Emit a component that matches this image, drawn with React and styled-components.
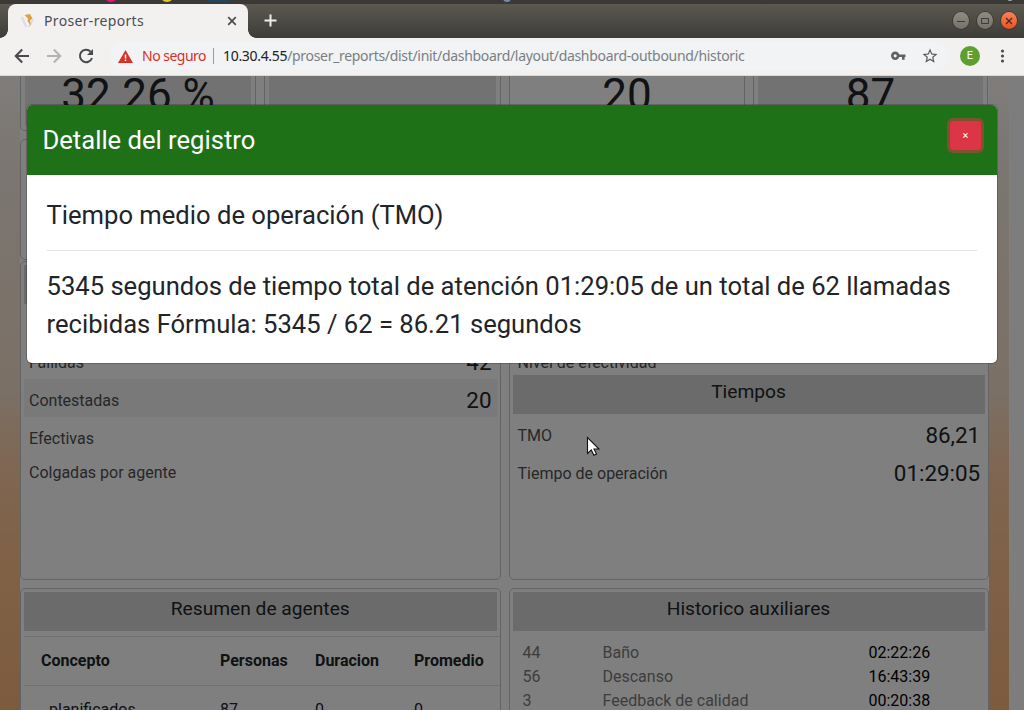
import React from "react";
import styled, { createGlobalStyle } from "styled-components";

const GlobalStyle = createGlobalStyle`
  *, *::before, *::after { box-sizing: border-box; }
  html, body { margin: 0; overflow: hidden; }
  body { font-family: Roboto, "Liberation Sans", sans-serif; color: #212529; }
`;

const Screen = styled.div`
  width: 1024px;
  height: 710px;
  display: flex;
  flex-direction: column;
  overflow: hidden;
`;

/* ---------- browser chrome ---------- */

const DesktopStrip = styled.div`
  flex: none;
  height: 4px;
  background: #3a3935;
`;

const TitleBar = styled.div`
  flex: none;
  height: 34px;
  display: flex;
  align-items: flex-start;
  background: linear-gradient(#5b5850, #55534b 20%, #3d3c37);
`;

const TabWrap = styled.div`
  flex: none;
  width: 256px;
  height: 34px;
  padding: 0 8px;
  background:
    radial-gradient(circle at 0 0, transparent 7.5px, #f2f1f0 8px) 0 100% / 8px 8px no-repeat,
    radial-gradient(circle at 100% 0, transparent 7.5px, #f2f1f0 8px) 100% 100% / 8px 8px no-repeat;
`;

const Tab = styled.div`
  height: 34px;
  display: flex;
  align-items: center;
  padding: 0 11px 0 12px;
  border-radius: 8px 8px 0 0;
  background: #f2f1f0;
`;

const TabTitle = styled.span`
  flex: 1;
  margin-left: 8px;
  font: 14px/18px "Noto Sans", "Open Sans", sans-serif;
  letter-spacing: 0.33px;
  color: #4b4d50;
`;

const NewTab = styled.div`
  flex: 1;
  padding: 10px 0 0 8px;
  line-height: 0;
`;

const WindowButtons = styled.div`
  display: flex;
  gap: 8px;
  padding: 8px 7px 0 0;
`;

const WindowButton = styled.span`
  width: 16px;
  height: 17px;
  border-radius: 50%;
  display: flex;
  align-items: center;
  justify-content: center;
  background: ${(p) => (p.$close ? "linear-gradient(#f98158, #ea5420)" : "linear-gradient(#8f8c83, #74726a)")};
  box-shadow: 0 0 0 0.7px #33322e;
`;

const Toolbar = styled.div`
  flex: none;
  height: 38px;
  display: flex;
  align-items: center;
  padding: 0 0 1px 14px;
  background: #f2f1f0;
  border-bottom: 1px solid #d9d8d7;
`;

const NavIcons = styled.div`
  width: 96px;
  display: flex;
  gap: 16px;
`;

const AddressBar = styled.div`
  width: 839px;
  height: 28px;
  display: flex;
  align-items: center;
  padding: 0 10px 0 8px;
  border-radius: 14px;
  background: #f1f3f4;
  font: 14px/20px "Noto Sans", "Open Sans", sans-serif;
`;

const Warning = styled.span`
  width: 65px;
  margin: 0 6px 0 9px;
  color: #d93025;
  letter-spacing: -0.5px;
  white-space: nowrap;
`;

const Divider = styled.span`
  width: 1px;
  height: 16px;
  margin-right: 9px;
  background: #9b9da0;
`;

const Url = styled.span`
  flex: 1;
  color: #7b7f83;
  letter-spacing: -0.315px;
  white-space: nowrap;
`;

const Host = styled.span`
  color: #202124;
`;

const AddressIcons = styled.span`
  display: flex;
  align-items: center;
  gap: 15px;
`;

const Avatar = styled.span`
  width: 20px;
  height: 20px;
  margin: 0 14px 0 11px;
  border-radius: 50%;
  background: #5f9f32;
  color: #fff;
  font: 11px/20px Roboto, sans-serif;
  text-align: center;
`;

/* ---------- dashboard ---------- */

const Viewport = styled.div`
  position: relative;
  flex: 1;
  display: flex;
  overflow: hidden;
  background: linear-gradient(#fffbf8 0, #f8efe6 10%, #f6e0cb 50%, #ffcfa9 60%, #ffc58e 75%, #fbb67d);
`;

const Page = styled.div`
  width: 969px;
  height: 634px;
  margin: 0 20px;
  overflow: hidden;
  background: #fff;
`;

const Scrollbar = styled.div`
  width: 15px;
  background: #fafafa;
  border-left: 1px solid #fff;
`;

const Grid = styled.div`
  display: grid;
  grid-template-columns: ${(p) => p.$columns};
  column-gap: 8px;
  margin-top: ${(p) => p.$top || 0}px;
`;

const Card = styled.div`
  height: ${(p) => p.$height}px;
  padding: 3px;
  border: 1px solid #c9c9c9;
  border-radius: 5px;
  background: #fff;
  overflow: hidden;
`;

const CounterCard = styled.div`
  height: 55px;
  padding: 0 4px 4px;
  border: 1px solid #c9c9c9;
  border-top: 0;
  border-radius: 0 0 5px 5px;
`;

const Counter = styled.div`
  height: 50px;
  background: ${(p) => (p.$plain ? "#fff" : "#e5e5e5")};
  font-size: 44px;
  line-height: 38px;
  text-align: center;
`;

const CardHeader = styled.div`
  height: 39px;
  background: #d6d6d6;
  font-size: 19.2px;
  line-height: 34px;
  text-align: center;
`;

const Row = styled.div`
  height: ${(p) => p.$height || 38}px;
  display: flex;
  justify-content: space-between;
  align-items: center;
  padding: 4px 5px 0;
  background: ${(p) => (p.$striped ? "#f2f2f2" : "#fff")};
  color: #4c4f52;
  font-size: 16px;
`;

const Value = styled.span`
  margin-right: ${(p) => (p.$flush ? -0.7 : 0)}px;
  color: #212529;
  font-size: 22.4px;
`;

const Spacer = styled.div`
  height: ${(p) => p.$height}px;
`;

const AgentTable = styled.div`
  margin: 5px -3px 0 0;
  border-top: 1px solid #dee2e6;
  font-size: 16px;
`;

const AgentRow = styled.div`
  height: 49px;
  display: grid;
  grid-template-columns: 179px 95px 99px 1fr;
  align-items: center;
  padding: 0 0 2px 17px;
  font-weight: ${(p) => (p.$head ? 700 : 400)};
  border-bottom: 1px solid #dee2e6;
`;

const Indent = styled.span`
  padding-left: 8px;
`;

const AuxList = styled.div`
  padding: 10px 0 0 10px;
  font-size: 16px;
  line-height: 24px;
`;

const AuxRow = styled.div`
  display: grid;
  grid-template-columns: 80px 266px 1fr;
  color: #7a7a7a;
`;

const AuxTime = styled.span`
  color: #000;
`;

/* ---------- modal ---------- */

const Backdrop = styled.div`
  position: absolute;
  inset: 0;
  padding: 29px 27px;
  background: rgba(0, 0, 0, 0.5);
`;

const Modal = styled.div`
  width: 970px;
  height: 258px;
  border-radius: 5px;
  background: #fff;
  box-shadow: 0 0 0 1px rgba(0, 0, 0, 0.2);
  overflow: hidden;
`;

const ModalHeader = styled.div`
  height: 70px;
  display: flex;
  justify-content: space-between;
  align-items: flex-start;
  padding: 16px 16px 16px 15.5px;
  background: #1e7117;
`;

const ModalTitle = styled.h5`
  margin: 0;
  color: #fff;
  font-size: 25.6px;
  font-weight: 400;
  line-height: 38px;
`;

const CloseButton = styled.button`
  width: 31px;
  height: 29px;
  padding: 0;
  border: 0;
  border-radius: 3px;
  background: #dc3545;
  box-shadow: 0 0 0 3px rgba(220, 53, 69, 0.5);
  color: #fff;
  font: 11px/29px Roboto, sans-serif;
`;

const ModalBody = styled.div`
  padding: 20px 20px 20px 19.5px;
  font-size: 25.6px;
  line-height: 38px;
`;

const Concept = styled.div`
  height: 56px;
  line-height: 41px;
  border-bottom: 1px solid #e5e5e5;
`;

const Detail = styled.div`
  padding-top: 16px;
`;

const Pointer = styled.svg`
  position: absolute;
  left: 586px;
  top: 360px;
`;

const counters = [
  { value: "32.26 %" },
  { value: "" },
  { value: "20", plain: true },
  { value: "87" },
];

const auxiliaries = [
  ["44", "Baño", "02:22:26"],
  ["56", "Descanso", "16:43:39"],
  ["3", "Feedback de calidad", "00:20:38"],
];

function BrowserChrome() {
  return (
    <>
      <DesktopStrip>
        <svg width="1024" height="4" display="block">
          <circle cx="111" cy="-5" r="7" fill="#e5177b" />
          <circle cx="167" cy="-5" r="7" fill="#e5c62f" />
          <rect x="208" width="22" height="2" fill="#1d4665" />
          <circle cx="507" cy="-2" r="4" fill="#7587b5" />
          <circle cx="1010" cy="-2" r="3" fill="#aaa" />
        </svg>
      </DesktopStrip>
      <TitleBar>
        <TabWrap>
          <Tab>
            <svg width="16" height="16" viewBox="0 0 16 16">
              <path d="M.8 4.5l2-1 4.500 10-2 1z" fill="#d9dee6" />
              <path d="M12.5 6l1.5.6-4 7-2.5.8z" fill="#d5dae4" />
              <path d="M4.500 2l5.500-1 2.500 4.500-2.500 2 1 5.500-3.500-5 .5-2.500z" fill="#dda23c" />
            </svg>
            <TabTitle>Proser-reports</TabTitle>
            <svg width="10" height="10" viewBox="0 0 10 10" stroke="#4b4d50" strokeWidth="1.7">
              <path d="M1.2 1.2l7.6 7.6M8.8 1.2L1.2 8.8" />
            </svg>
          </Tab>
        </TabWrap>
        <NewTab>
          <svg width="13" height="13" viewBox="0 0 13 13" stroke="#eeedeb" strokeWidth="2">
            <path d="M6.5 .5v12M.5 6.5h12" />
          </svg>
        </NewTab>
        <WindowButtons>
          <WindowButton>
            <svg width="10" height="10" stroke="#3b3a36"><path d="M1 5.5h8" /></svg>
          </WindowButton>
          <WindowButton>
            <svg width="10" height="10" fill="none" stroke="#3b3a36"><path d="M1.5 2.5h7v5h-7z" /></svg>
          </WindowButton>
          <WindowButton $close>
            <svg width="8" height="8" stroke="#4a2a1c" strokeWidth="1.3"><path d="M1 1l6 6M7 1L1 7" /></svg>
          </WindowButton>
        </WindowButtons>
      </TitleBar>
      <Toolbar>
        <NavIcons>
          <svg width="16" height="16" viewBox="0 0 16 16" fill="none" stroke="#484a4d" strokeWidth="2">
            <path d="M15 8H2M8.2 1.5L1.7 8l6.5 6.5" />
          </svg>
          <svg width="16" height="16" viewBox="0 0 16 16" fill="none" stroke="#b3b2b1" strokeWidth="2">
            <path d="M1 8h13M7.8 1.5L14.3 8l-6.5 6.5" />
          </svg>
          <svg width="16" height="16" viewBox="0 0 16 16" fill="none" stroke="#484a4d" strokeWidth="2">
            <path d="M12.6 3.6A6.2 6.2 0 1 0 14 10" />
            <path d="M15 1v6H9z" fill="#484a4d" stroke="none" />
          </svg>
        </NavIcons>
        <AddressBar>
          <svg width="15" height="13" viewBox="0 0 15 13">
            <path d="M7.5 0L15 13H0z" fill="#d93025" />
            <path d="M7.5 4.5v4M7.5 9.5v1.6" stroke="#fff" strokeWidth="1.5" />
          </svg>
          <Warning>No seguro</Warning>
          <Divider />
          <Url>
            <Host>10.30.4.55</Host>/proser_reports/dist/init/dashboard/layout/dashboard-outbound/historic
          </Url>
          <AddressIcons>
            <svg width="15" height="10" viewBox="0 0 15 10" fill="none" stroke="#5f6164" strokeWidth="2.6">
              <circle cx="4.2" cy="4.8" r="2.9" />
              <path d="M7 4.8h7.5M12.3 4.8V8.8" />
            </svg>
            <svg width="18" height="18" viewBox="0 0 24 24" fill="#5a5c60">
              <path d="M22 9.24l-7.19-.62L12 2 9.19 8.63 2 9.24l5.46 4.73L5.82 21 12 17.27 18.18 21l-1.63-7.03L22 9.24zM12 15.4l-3.76 2.27 1-4.28-3.32-2.88 4.38-.38L12 6.1l1.71 4.04 4.38.38-3.32 2.88 1 4.28L12 15.4z" />
            </svg>
          </AddressIcons>
        </AddressBar>
        <Avatar>E</Avatar>
        <svg width="16" height="16" viewBox="0 0 16 16" fill="#4a4c4f">
          <circle cx="8.5" cy="3" r="1.6" />
          <circle cx="8.5" cy="8" r="1.6" />
          <circle cx="8.5" cy="13" r="1.6" />
        </svg>
      </Toolbar>
    </>
  );
}

function Dashboard() {
  return (
    <Page>
      <Grid $columns="236px 237px 236px 235px">
        {counters.map((c, i) => (
          <CounterCard key={i}>
            <Counter $plain={c.plain}>{c.value}</Counter>
          </CounterCard>
        ))}
      </Grid>
      <Grid $top={8} $columns="480.5px 480px">
        <Card $height={121} />
        <Card $height={121} />
      </Grid>
      <Grid $top={1} $columns="480.5px 480px">
        <Card $height={319}>
          <CardHeader />
          <Spacer $height={37} />
          <Row>Fallidas<Value>42</Value></Row>
          <Row $striped>Contestadas<Value>20</Value></Row>
          <Spacer $height={2} />
          <Row $height={34}>Efectivas</Row>
          <Row $height={34}>Colgadas por agente</Row>
        </Card>
        <Card $height={319}>
          <CardHeader />
          <Spacer $height={41} />
          <Row $height={30}>Nivel de efectividad</Row>
          <CardHeader>Tiempos</CardHeader>
          <Row>TMO<Value $flush>86,21</Value></Row>
          <Row>Tiempo de operación<Value $flush>01:29:05</Value></Row>
        </Card>
      </Grid>
      <Grid $top={8} $columns="480.5px 480px">
        <Card $height={200}>
          <CardHeader>Resumen de agentes</CardHeader>
          <AgentTable>
            <AgentRow $head>
              <span>Concepto</span><span>Personas</span><span>Duracion</span><span>Promedio</span>
            </AgentRow>
            <AgentRow>
              <Indent>planificados</Indent><span>87</span><span>0</span><span>0</span>
            </AgentRow>
          </AgentTable>
        </Card>
        <Card $height={200}>
          <CardHeader>Historico auxiliares</CardHeader>
          <AuxList>
            {auxiliaries.map(([count, name, time]) => (
              <AuxRow key={name}>
                <span>{count}</span><span>{name}</span><AuxTime>{time}</AuxTime>
              </AuxRow>
            ))}
          </AuxList>
        </Card>
      </Grid>
    </Page>
  );
}

export default function App() {
  return (
    <Screen>
      <GlobalStyle />
      <BrowserChrome />
      <Viewport>
        <Dashboard />
        <Scrollbar />
        <Backdrop>
          <Modal>
            <ModalHeader>
              <ModalTitle>Detalle del registro</ModalTitle>
              <CloseButton>×</CloseButton>
            </ModalHeader>
            <ModalBody>
              <Concept>Tiempo medio de operación (TMO)</Concept>
              <Detail>
                5345 segundos de tiempo total de atención 01:29:05 de un total de 62 llamadas recibidas Fórmula: 5345 / 62 = 86.21 segundos
              </Detail>
            </ModalBody>
          </Modal>
        </Backdrop>
        <Pointer width="14" height="22" viewBox="0 0 14 22">
          <path d="M1.5 1.5v16l3.8-3.6 2.6 5.3 2.6-1.2-2.5-5H13z" fill="#fff" stroke="#111" strokeWidth="1.1" />
        </Pointer>
      </Viewport>
    </Screen>
  );
}
